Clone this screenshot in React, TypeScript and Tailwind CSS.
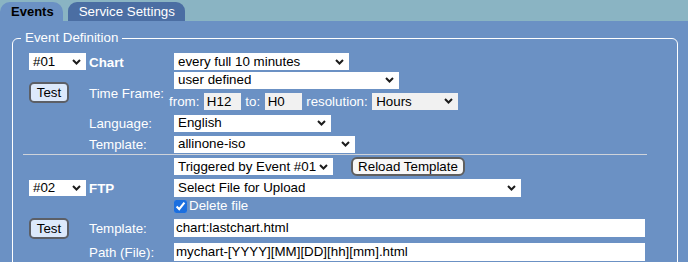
import React from "react";

const Chevron = () => (
  <svg
    className="pointer-events-none absolute right-[5px] top-1/2 -translate-y-1/2"
    width="9"
    height="6"
    viewBox="0 0 9 6"
  >
    <path d="M1 1l3.5 3.5L8 1" stroke="#1c1c1c" strokeWidth="2" fill="none" />
  </svg>
);

// select look-alike: white box, text on the left, chevron on the right
const Select = ({ value, className }: { value: string; className: string }) => (
  <div className={`relative flex items-center pl-1 text-[13.33px] leading-none text-black ${className}`}>
    <span>{value}</span>
    <Chevron />
  </div>
);

const TestButton = () => (
  <button className="h-[21px] w-[40px] rounded-[5px] border-2 border-[#5c5f66] bg-[#dce9fb] text-[13.33px] leading-none text-black">
    Test
  </button>
);

const Label = ({ children, bold }: { children: React.ReactNode; bold?: boolean }) => (
  <span className={`text-[13.33px] text-white ${bold ? "font-bold" : ""}`}>{children}</span>
);

export default function App() {
  return (
    <div className="h-[262px] w-[688px] overflow-hidden bg-[#6b91c4] font-['Liberation_Sans',Arial,sans-serif]">
      {/* tabs */}
      <div className="flex h-[21px] items-end gap-[5px] bg-[#8ab4c3]">
        <div className="flex h-[19px] items-center rounded-t-[10px] bg-[#6b91c4] pl-[11px] pr-[9px] text-[13px] font-bold text-black">
          Events
        </div>
        <div className="flex h-[19px] items-center rounded-t-[9px] bg-[#4b6ea3] pl-[11px] pr-[10px] text-[13.33px] text-white">
          Service Settings
        </div>
      </div>

      <fieldset className="ml-[12px] mt-[9px] h-[260px] w-[666px] rounded-[6px] border border-white pl-2">
        <legend className="px-1 text-[13.33px] leading-4 text-white">Event Definition</legend>

        <div className="pl-2 pt-[6px]">
          {/* Chart */}
          <div className="flex h-[19px] items-center">
            <div className="w-[60px]">
              <Select value="#01" className="h-[17px] w-[57px] bg-white" />
            </div>
            <div className="w-[85px]">
              <Label bold>Chart</Label>
            </div>
            <Select value="every full 10 minutes" className="h-[17px] w-[175px] bg-white" />
          </div>

          <div className="flex h-[41px] items-center">
            <div className="w-[60px]">
              <TestButton />
            </div>
            <div className="w-[85px] pt-[3px]">
              <Label>Time Frame:</Label>
            </div>
            <div className="flex flex-col gap-[3px]">
              <Select value="user defined" className="h-[17px] w-[225px] bg-white" />
              <div className="-ml-[5px] flex items-center gap-[4.5px]">
                <Label>from:</Label>
                <input
                  readOnly
                  value="H12"
                  className="h-[17px] w-[37px] border-0 bg-[#f1f1f1] pl-[3px] text-[13.33px] text-black outline-none"
                />
                <Label>to:</Label>
                <input
                  readOnly
                  value="H0"
                  className="h-[17px] w-[37px] border-0 bg-[#f1f1f1] pl-[3px] text-[13.33px] text-black outline-none"
                />
                <Label>resolution:</Label>
                <Select value="Hours" className="h-[17px] w-[86px] bg-[#f1f1f1]" />
              </div>
            </div>
          </div>

          <div className="flex h-[22px] items-center">
            <div className="w-[60px]" />
            <div className="w-[85px]">
              <Label>Language:</Label>
            </div>
            <Select value="English" className="h-[17px] w-[157px] bg-white" />
          </div>

          <div className="flex h-[20px] items-center">
            <div className="w-[60px]" />
            <div className="w-[85px]">
              <Label>Template:</Label>
            </div>
            <Select value="allinone-iso" className="h-[17px] w-[181px] bg-white" />
          </div>

          <div className="-ml-[6px] h-px w-[624px] bg-[#cfd3da]" />

          {/* FTP */}
          <div className="flex h-[23px] items-center">
            <div className="w-[145px]" />
            <Select value="Triggered by Event #01" className="h-[17px] w-[159px] bg-white" />
            <button className="ml-[18px] h-[19px] w-[114px] rounded-[6px] border-2 border-[#5f5f5f] bg-[#f7f7f7] text-[13.33px] leading-none text-black">
              Reload Template
            </button>
          </div>

          <div className="flex h-[20px] items-center">
            <div className="w-[60px]">
              <Select value="#02" className="h-[16px] w-[57px] bg-white" />
            </div>
            <div className="w-[85px]">
              <Label bold>FTP</Label>
            </div>
            <Select value="Select File for Upload" className="h-[18px] w-[347px] bg-white" />
          </div>

          <div className="flex h-[16px] items-center">
            <div className="w-[145px]" />
            <label className="flex items-center gap-[2px]">
              <input type="checkbox" defaultChecked className="h-[13px] w-[13px] accent-[#1b6fe0]" />
              <Label>Delete file</Label>
            </label>
          </div>

          <div className="flex h-[28px] items-center">
            <div className="w-[60px]">
              <TestButton />
            </div>
            <div className="w-[85px]">
              <Label>Template:</Label>
            </div>
            <input
              readOnly
              value="chart:lastchart.html"
              className="h-[18px] w-[471px] border-0 bg-white pl-[2px] text-[13.33px] text-black outline-none"
            />
          </div>

          <div className="flex h-[19px] items-center">
            <div className="w-[60px]" />
            <div className="w-[85px]">
              <Label>Path (File):</Label>
            </div>
            <input
              readOnly
              value="mychart-[YYYY][MM][DD][hh][mm].html"
              className="h-[18px] w-[471px] border-0 bg-white pl-[2px] text-[13.33px] text-black outline-none"
            />
          </div>
        </div>
      </fieldset>
    </div>
  );
}
